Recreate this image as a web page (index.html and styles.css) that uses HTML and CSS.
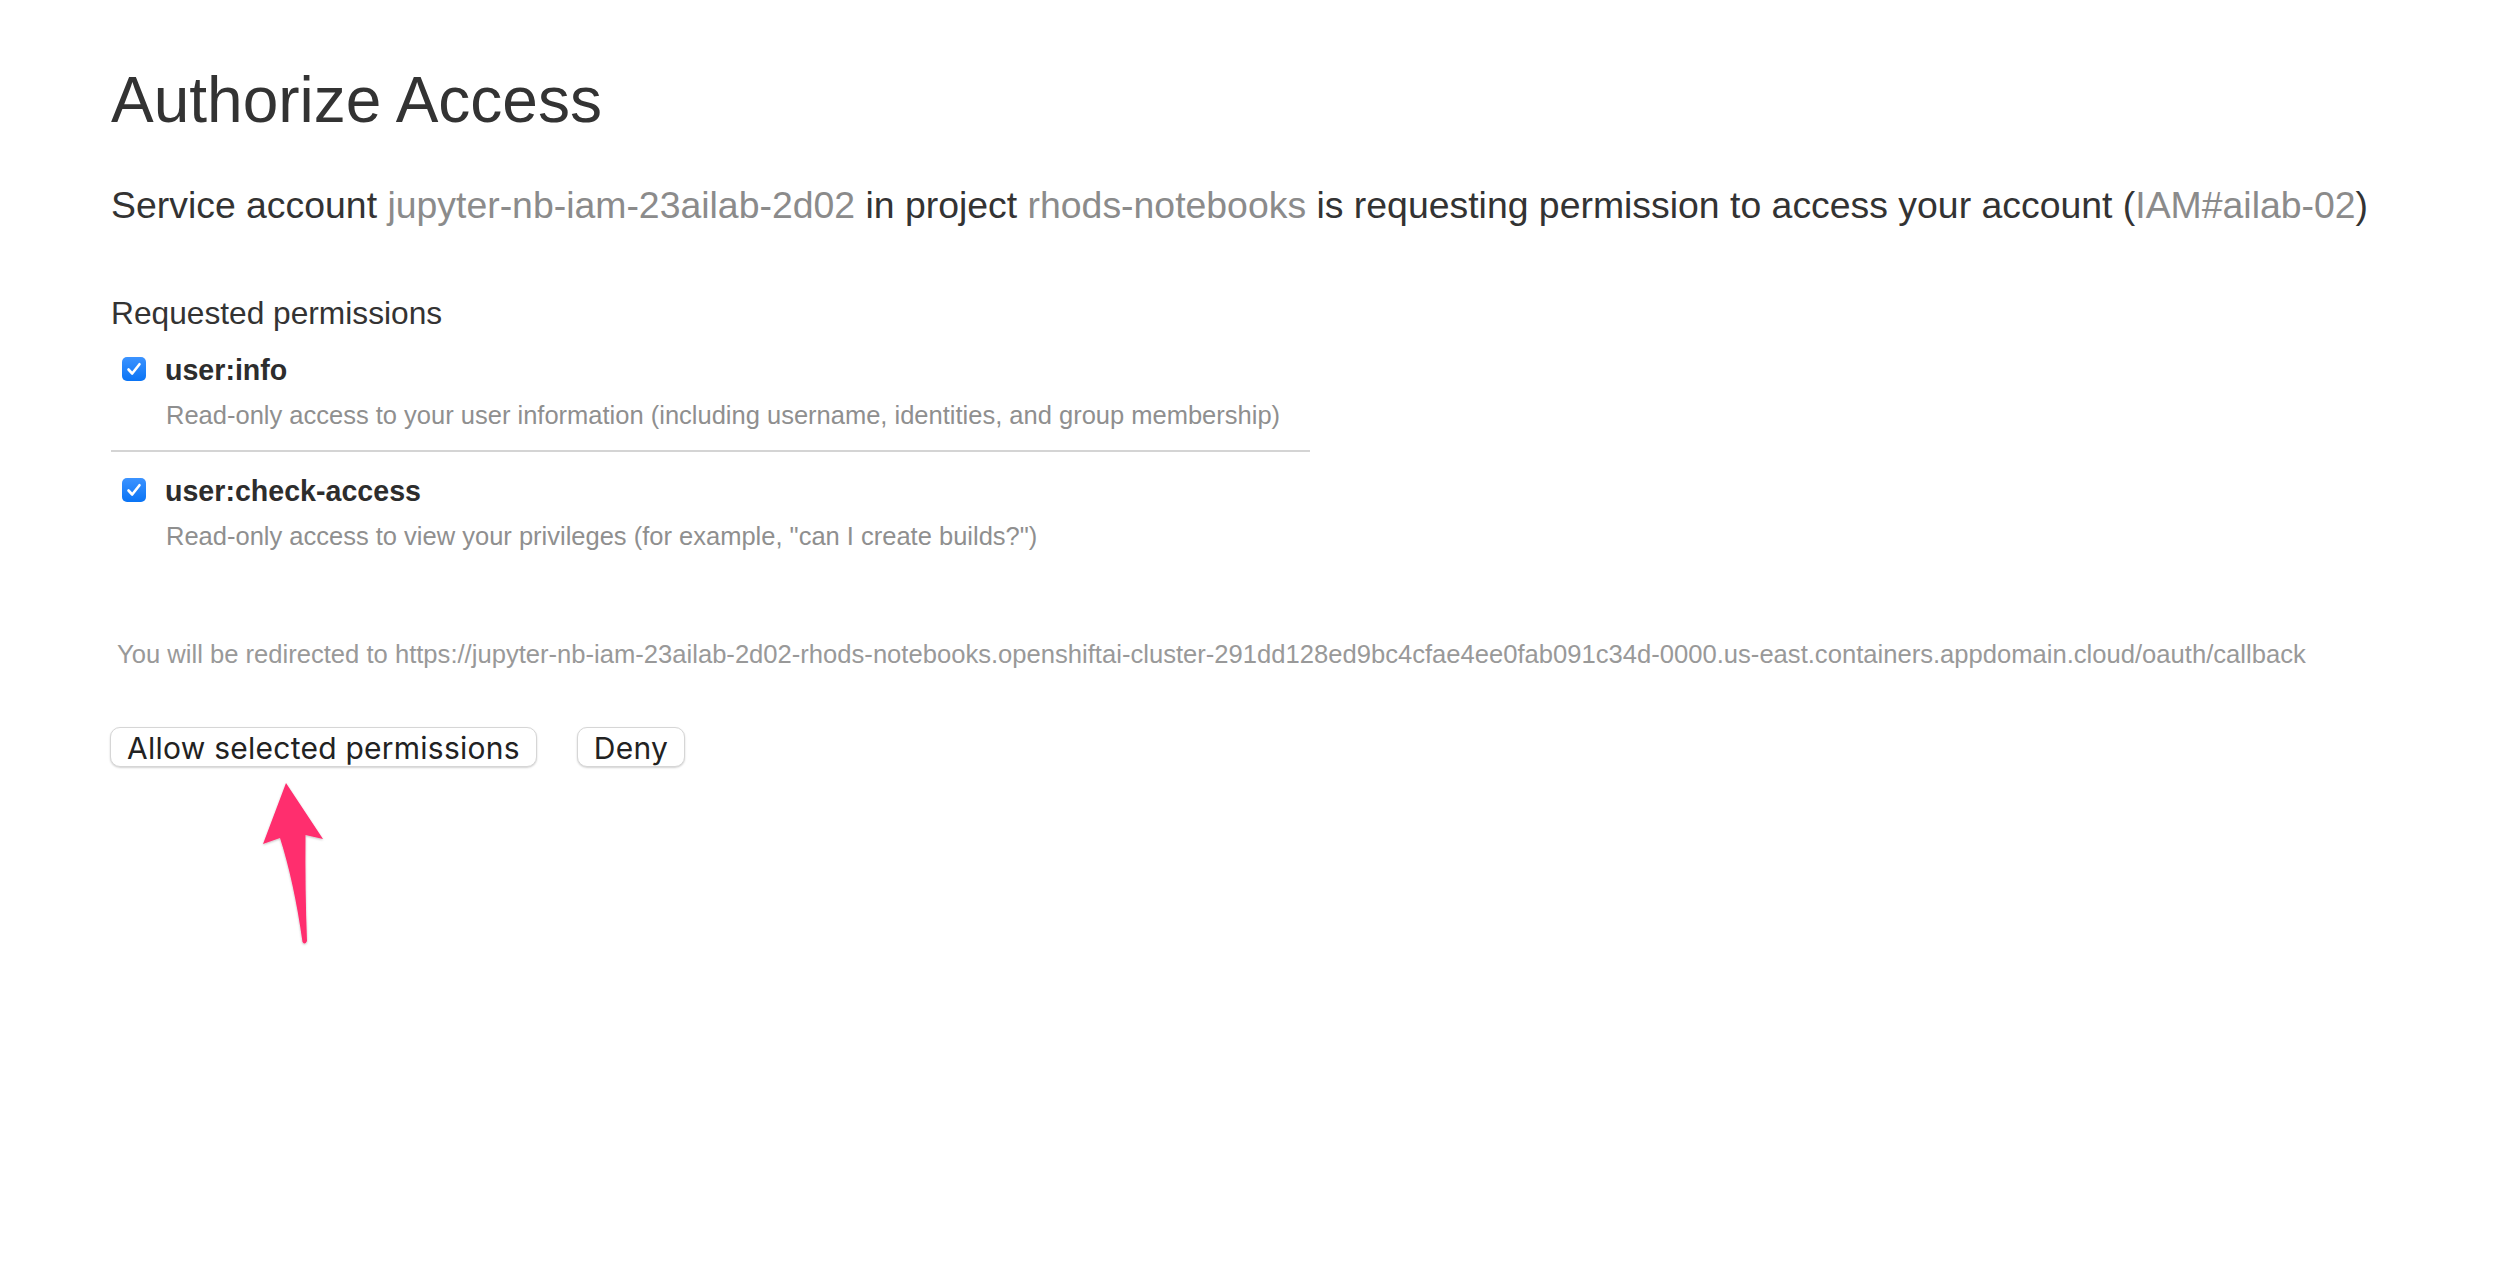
FILE: index.html
```html
<!DOCTYPE html>
<html lang="en">
<head>
<meta charset="utf-8">
<title>Authorize Access</title>
<link rel="stylesheet" href="styles.css">
</head>
<body>
<main class="page">
  <h1 class="title">Authorize Access</h1>
  <p class="lead">Service account <span class="ref">jupyter-nb-iam-23ailab-2d02</span> in project <span class="ref">rhods-notebooks</span> is requesting permission to access your account (<span class="ref">IAM#ailab-02</span>)</p>

  <h4 class="section">Requested permissions</h4>

  <div class="perm perm-first">
    <div class="perm-row">
      <span class="check"><svg viewBox="0 0 24 24" width="24" height="24"><path d="M6.5 12.5 L10.2 16.5 L17.5 7.2" fill="none" stroke="#fff" stroke-width="2.6" stroke-linecap="round" stroke-linejoin="round"/></svg></span>
      <span class="perm-name">user:info</span>
    </div>
    <div class="perm-desc">Read-only access to your user information (including username, identities, and group membership)</div>
  </div>

  <div class="perm perm-last">
    <div class="perm-row">
      <span class="check"><svg viewBox="0 0 24 24" width="24" height="24"><path d="M6.5 12.5 L10.2 16.5 L17.5 7.2" fill="none" stroke="#fff" stroke-width="2.6" stroke-linecap="round" stroke-linejoin="round"/></svg></span>
      <span class="perm-name">user:check-access</span>
    </div>
    <div class="perm-desc">Read-only access to view your privileges (for example, "can I create builds?")</div>
  </div>

  <p class="redirect">You will be redirected to https://jupyter-nb-iam-23ailab-2d02-rhods-notebooks.openshiftai-cluster-291dd128ed9bc4cfae4ee0fab091c34d-0000.us-east.containers.appdomain.cloud/oauth/callback</p>

  <div class="actions">
    <button class="btn" type="button">Allow selected permissions</button>
    <button class="btn" type="button">Deny</button>
  </div>

  <svg class="arrow" viewBox="0 0 90 190" width="90" height="190">
    <defs>
      <filter id="sh" x="-30%" y="-10%" width="160%" height="130%">
        <feDropShadow dx="0" dy="1" stdDeviation="1.2" flood-color="#000" flood-opacity="0.25"/>
      </filter>
    </defs>
    <path d="M36 13 L73 69 L55.5 65 Q55 120 57 171 Q55 175.5 52.5 172 Q44 112 30 68 L13 74 Z" fill="#ff2d6e" filter="url(#sh)"/>
  </svg>
</main>
</body>
</html>
```

FILE: styles.css
```css
html, body {
  margin: 0;
  padding: 0;
  background: #ffffff;
}

body {
  font-family: "Liberation Sans", Helvetica, Arial, sans-serif;
  color: #333333;
}

.page {
  position: relative;
  padding: 65px 0 0 111px;
  min-height: 1207px;
}

.title {
  margin: 0;
  font-size: 64px;
  line-height: 70px;
  font-weight: 400;
  color: #333333;
}

.lead {
  margin: 48px 0 0 0;
  font-size: 37.4px;
  line-height: 44px;
  white-space: nowrap;
  color: #333333;
}

.ref {
  color: #8b8b8b;
}

.section {
  margin: 68px 0 0 0;
  font-size: 31.7px;
  line-height: 36px;
  font-weight: 400;
  color: #333333;
}

.perm {
  width: 1199px;
}

.perm-first {
  margin-top: 22px;
  padding-bottom: 20px;
  border-bottom: 2px solid #d4d4d4;
}

.perm-last {
  padding-top: 22px;
}

.perm-row {
  display: flex;
  align-items: flex-start;
  height: 34px;
}

.check {
  display: block;
  width: 24px;
  height: 24px;
  margin: 4px 19px 0 11px;
  border-radius: 5px;
  background: linear-gradient(#3c93ff, #0a74f5);
}

.check svg {
  display: block;
}

.perm-name {
  font-size: 28.6px;
  line-height: 34px;
  font-weight: 700;
  color: #2d2d2d;
}

.perm-desc {
  margin-top: 13px;
  padding-left: 55px;
  font-size: 25.5px;
  line-height: 30px;
  color: #8f8f8f;
  white-space: nowrap;
}

.redirect {
  margin: 88px 0 0 0;
  padding-left: 6px;
  font-size: 25.6px;
  line-height: 30px;
  color: #999999;
  white-space: nowrap;
}

.actions {
  display: flex;
  gap: 40px;
  margin-top: 58px;
  margin-left: -1px;
}

.btn {
  height: 40px;
  padding: 0 16px 0 16px;
  font-family: Inter, "Liberation Sans", sans-serif;
  font-size: 30px;
  letter-spacing: 0.25px;
  line-height: 40px;
  color: #222222;
  background: #ffffff;
  border: 1px solid #d6d6d6;
  border-radius: 10px;
  box-shadow: 0 1px 2px rgba(0, 0, 0, 0.18);
}

.arrow {
  position: absolute;
  left: 250px;
  top: 770px;
}
```
